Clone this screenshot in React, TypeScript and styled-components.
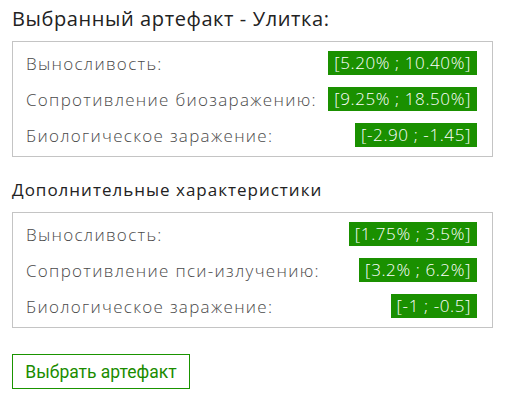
import React from "react";
import styled, { createGlobalStyle } from "styled-components";

const GlobalStyle = createGlobalStyle`
  body {
    margin: 0;
    background: #fff;
    font-family: "Open Sans", "Liberation Sans", sans-serif;
  }
`;

type Stat = { label: string; value: string };

const mainStats: Stat[] = [
  { label: "Выносливость:", value: "[5.20% ; 10.40%]" },
  { label: "Сопротивление биозаражению:", value: "[9.25% ; 18.50%]" },
  { label: "Биологическое заражение:", value: "[-2.90 ; -1.45]" },
];

const extraStats: Stat[] = [
  { label: "Выносливость:", value: "[1.75% ; 3.5%]" },
  { label: "Сопротивление пси-излучению:", value: "[3.2% ; 6.2%]" },
  { label: "Биологическое заражение:", value: "[-1 ; -0.5]" },
];

const StatBox: React.FC<{ stats: Stat[] }> = ({ stats }) => (
  <Box>
    {stats.map((s) => (
      <Row key={s.label}>
        <Label>{s.label}</Label>
        <Badge>{s.value}</Badge>
      </Row>
    ))}
  </Box>
);

export default function App() {
  return (
    <>
      <GlobalStyle />
      <Page>
        <Title>Выбранный артефакт - Улитка:</Title>
        <StatBox stats={mainStats} />
        <Subtitle>Дополнительные характеристики</Subtitle>
        <StatBox stats={extraStats} />
        <SelectButton>Выбрать артефакт</SelectButton>
      </Page>
    </>
  );
}

const Page = styled.div`
  width: 481px;
  padding: 6px 12px 0;
`;

const Title = styled.h2`
  margin: 0 0 9px;
  font-size: 20px;
  line-height: 26px;
  font-weight: 400;
  letter-spacing: 0.6px;
  color: #222;
`;

const Subtitle = styled.h3`
  margin: 22px 0 11px;
  font-size: 17px;
  line-height: 22px;
  font-weight: 400;
  letter-spacing: 1px;
  color: #222;
`;

const Box = styled.div`
  border: 1px solid #c4c4c4;
  padding: 9px 15px 9px 13px;
  display: flex;
  flex-direction: column;
  gap: 12px;
`;

const Row = styled.div`
  display: flex;
  align-items: center;
  justify-content: space-between;
  height: 24px;
`;

const Label = styled.span`
  font-size: 17px;
  font-weight: 300;
  letter-spacing: 1.3px;
  color: #4a4a4a;
`;

const Badge = styled.span`
  background: #1a9000;
  color: #fff;
  font-size: 17px;
  font-weight: 300;
  letter-spacing: 0.6px;
  line-height: 24px;
  padding: 0 6px;
`;

const SelectButton = styled.button`
  margin-top: 26px;
  height: 35px;
  width: 178px;
  background: #fff;
  border: 1px solid #1a9400;
  color: #1a8c00;
  font-family: Roboto, "Liberation Sans", sans-serif;
  font-size: 17.5px;
  cursor: pointer;
`;
